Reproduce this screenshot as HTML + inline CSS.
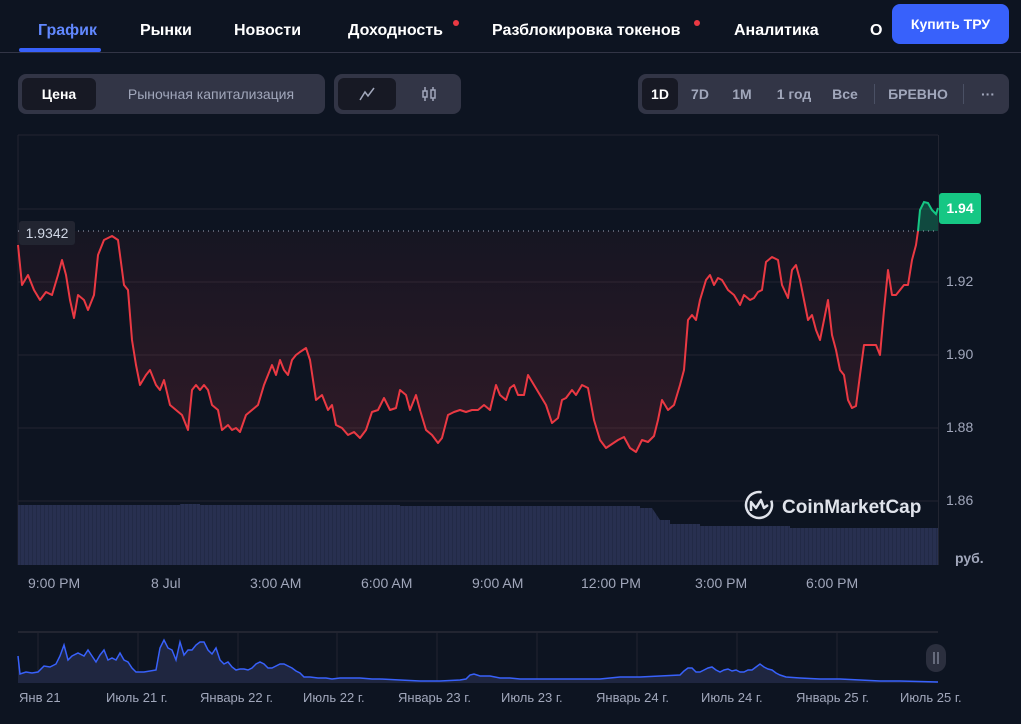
<!DOCTYPE html>
<html><head><meta charset="utf-8"><style>
*{margin:0;padding:0;box-sizing:border-box}
body{width:1021px;height:724px;background:#0d1421;font-family:"Liberation Sans",sans-serif;color:#fff;position:relative;overflow:hidden}
.tab{position:absolute;top:22px;font-size:16px;font-weight:bold;color:#fff}
.dot{position:absolute;width:6px;height:6px;border-radius:3px;background:#ea3943}
.pill{position:absolute;top:74px;height:40px;background:#323546;border-radius:8px}
.seg{position:absolute;top:4px;height:32px;border-radius:6px;font-size:14px;font-weight:bold;line-height:32px;text-align:center;color:#a1a7bb}
.ax{position:absolute;font-size:14px;color:#a1a7bb}
.tl{position:absolute;top:575px;font-size:14px;color:#a1a7bb}
.nl{position:absolute;top:690px;font-size:13px;color:#a1a7bb}
</style></head><body>
<div class="tab" style="left:38px;color:#6188ff">График</div>
<div style="position:absolute;left:19px;top:48px;width:82px;height:4px;background:#3861fb;border-radius:2px"></div>
<div style="position:absolute;left:0;top:52px;width:1021px;height:1px;background:#323546"></div>
<div class="tab" style="left:140px">Рынки</div>
<div class="tab" style="left:234px">Новости</div>
<div class="tab" style="left:348px">Доходность</div><div class="dot" style="left:453px;top:20px"></div>
<div class="tab" style="left:492px">Разблокировка токенов</div><div class="dot" style="left:694px;top:20px"></div>
<div class="tab" style="left:734px">Аналитика</div>
<div class="tab" style="left:870px">О</div>
<div style="position:absolute;left:892px;top:4px;width:117px;height:40px;background:#3861fb;border-radius:8px;font-size:14px;font-weight:bold;line-height:40px;text-align:center">Купить TРУ</div>

<div class="pill" style="left:18px;width:307px">
<div class="seg" style="left:4px;width:74px;background:#171924;color:#fff">Цена</div>
<div class="seg" style="left:86px;width:214px;font-weight:normal">Рыночная капитализация</div></div>
<div class="pill" style="left:334px;width:127px">
<div class="seg" style="left:4px;width:58px;background:#171924"><svg width="18" height="16" viewBox="0 0 18 16" style="margin-top:8px"><path d="M2 14L7 6L10 10L16 2" stroke="#a1a7bb" stroke-width="1.5" fill="none"/></svg></div>
<div class="seg" style="left:66px;width:58px"><svg width="18" height="16" viewBox="0 0 18 16" style="margin-top:8px"><path d="M5 1V15M13 1V15" stroke="#a1a7bb" stroke-width="1.5"/><rect x="3" y="5" width="4" height="6" fill="#323546" stroke="#a1a7bb" stroke-width="1.5"/><rect x="11" y="4" width="4" height="8" fill="#323546" stroke="#a1a7bb" stroke-width="1.5"/></svg></div></div>
<div class="pill" style="left:638px;width:371px">
<div class="seg" style="left:4px;width:36px;background:#171924;color:#fff">1D</div>
<div class="seg" style="left:44px;width:36px">7D</div>
<div class="seg" style="left:86px;width:36px">1M</div>
<div class="seg" style="left:130px;width:52px">1 год</div>
<div class="seg" style="left:188px;width:38px">Все</div>
<div style="position:absolute;left:236px;top:10px;width:1px;height:20px;background:#4a5064"></div>
<div class="seg" style="left:242px;width:76px">БРЕВНО</div>
<div style="position:absolute;left:325px;top:10px;width:1px;height:20px;background:#4a5064"></div>
<div class="seg" style="left:332px;width:36px">···</div></div>

<svg style="position:absolute;left:0;top:0" width="1021" height="724">
<defs>
<linearGradient id="rg2" x1="0" y1="231" x2="0" y2="460" gradientUnits="userSpaceOnUse"><stop offset="0" stop-color="#ea3943" stop-opacity="0.04"/><stop offset="0.8" stop-color="#ea3943" stop-opacity="0.14"/><stop offset="1" stop-color="#ea3943" stop-opacity="0.16"/></linearGradient>
<pattern id="vp" width="4" height="10" patternUnits="userSpaceOnUse"><rect width="4" height="10" fill="#283050"/><rect width="1" height="10" fill="#222a46"/></pattern>
<path id="pl" d="M18,245L22,285L28,275L34,290L40,300L46,292L52,295L58,275L62,260L66,275L70,300L74,318L78,295L84,300L88,310L94,295L98,255L104,240L112,236L118,240L124,285L128,290L132,340L136,365L140,385L146,375L150,370L156,385L160,390L164,380L170,405L176,410L182,415L188,430L192,390L196,385L200,390L204,385L208,390L212,405L218,410L222,430L228,425L232,430L236,428L240,432L246,415L252,410L258,405L264,385L268,375L272,365L276,375L280,360L284,370L288,375L292,360L296,355L300,352L306,348L310,360L316,400L322,395L328,410L332,405L336,425L342,428L348,435L354,432L360,438L366,430L372,412L378,410L384,398L390,410L396,408L400,390L406,395L410,410L416,395L420,410L426,430L432,435L438,443L442,438L448,415L454,412L460,410L466,412L472,410L478,410L484,405L490,410L496,385L500,395L506,400L510,388L514,385L518,395L524,395L528,375L534,385L540,395L546,405L552,423L558,418L562,400L566,398L572,390L576,395L582,385L588,388L594,420L600,440L606,448L612,444L618,440L624,437L630,448L636,452L642,440L648,442L654,436L658,420L662,400L668,410L674,405L680,385L684,370L688,320L692,315L696,320L700,300L706,280L710,275L714,285L718,278L722,280L728,290L734,295L740,305L744,295L750,300L754,298L758,292L762,290L766,262L772,257L778,260L782,285L788,298L792,270L796,265L800,280L804,300L808,320L812,315L816,330L820,340L824,320L828,300L832,335L836,350L840,370L844,375L848,400L852,408L856,406L860,375L864,345L868,345L872,345L876,345L880,355L884,310L888,270L892,295L896,295L900,290L904,285L908,285L912,260L916,245L918,231"/>
<path id="nv" d="M18,656L20,674L26,672L32,673L38,672L44,666L50,667L56,664L60,656L64,645L68,660L72,656L78,653L84,656L88,650L92,656L96,662L100,655L104,650L108,660L112,658L116,660L120,653L124,660L128,662L132,668L136,672L144,672L156,670L160,648L164,640L168,648L172,650L176,660L180,642L184,655L188,650L192,650L196,645L200,642L204,642L208,650L212,654L216,648L220,660L224,664L228,662L232,667L236,670L240,669L244,669L248,670L252,668L256,664L260,662L264,664L268,668L272,668L276,666L280,664L284,664L288,666L292,668L296,671L300,673L304,677L310,677L318,678L326,678L332,679L340,678L350,678L360,678L372,679L380,679L400,680L420,681L440,681L460,680L466,679L470,675L474,674L480,676L490,676L500,678L510,678L520,679L540,679L560,679L600,679L620,677L640,677L680,675L684,671L688,668L692,668L696,672L700,672L704,670L708,668L712,667L716,670L720,672L724,670L728,669L732,671L736,670L740,672L744,672L748,670L752,670L756,667L760,664L764,667L768,669L772,670L776,673L780,675L786,677L800,678L820,679L840,679L860,680L880,681L900,681L938,682"/>
</defs>
<g stroke="#222531" stroke-width="1">
<line x1="18" y1="135" x2="938" y2="135"/><line x1="18" y1="209" x2="938" y2="209"/><line x1="18" y1="282" x2="938" y2="282"/><line x1="18" y1="355" x2="938" y2="355"/><line x1="18" y1="428" x2="938" y2="428"/><line x1="18" y1="501" x2="938" y2="501"/>
<line x1="18" y1="135" x2="18" y2="565"/><line x1="938.5" y1="135" x2="938.5" y2="565"/></g>
<path d="M18 505H180V504H200V505H400V506H640V508H652L660 520H670V524H700V526H790V528H938V565H18Z" fill="url(#vp)"/>
<path d="M18,231L18,245L22,285L28,275L34,290L40,300L46,292L52,295L58,275L62,260L66,275L70,300L74,318L78,295L84,300L88,310L94,295L98,255L104,240L112,236L118,240L124,285L128,290L132,340L136,365L140,385L146,375L150,370L156,385L160,390L164,380L170,405L176,410L182,415L188,430L192,390L196,385L200,390L204,385L208,390L212,405L218,410L222,430L228,425L232,430L236,428L240,432L246,415L252,410L258,405L264,385L268,375L272,365L276,375L280,360L284,370L288,375L292,360L296,355L300,352L306,348L310,360L316,400L322,395L328,410L332,405L336,425L342,428L348,435L354,432L360,438L366,430L372,412L378,410L384,398L390,410L396,408L400,390L406,395L410,410L416,395L420,410L426,430L432,435L438,443L442,438L448,415L454,412L460,410L466,412L472,410L478,410L484,405L490,410L496,385L500,395L506,400L510,388L514,385L518,395L524,395L528,375L534,385L540,395L546,405L552,423L558,418L562,400L566,398L572,390L576,395L582,385L588,388L594,420L600,440L606,448L612,444L618,440L624,437L630,448L636,452L642,440L648,442L654,436L658,420L662,400L668,410L674,405L680,385L684,370L688,320L692,315L696,320L700,300L706,280L710,275L714,285L718,278L722,280L728,290L734,295L740,305L744,295L750,300L754,298L758,292L762,290L766,262L772,257L778,260L782,285L788,298L792,270L796,265L800,280L804,300L808,320L812,315L816,330L820,340L824,320L828,300L832,335L836,350L840,370L844,375L848,400L852,408L856,406L860,375L864,345L868,345L872,345L876,345L880,355L884,310L888,270L892,295L896,295L900,290L904,285L908,285L912,260L916,245L918,231Z" fill="url(#rg2)"/>
<use href="#pl" fill="none" stroke="#ea3943" stroke-width="2" stroke-linejoin="round"/>
<path d="M918,231L920,210L924,202L928,203L932,210L936,214L938,208L938,231Z" fill="#16c784" fill-opacity="0.3"/>
<path d="M918,231L920,210L924,202L928,203L932,210L936,214L938,208" fill="none" stroke="#16c784" stroke-width="2"/>
<line x1="18" y1="231" x2="938" y2="231" stroke="#a1a7bb" stroke-width="1" stroke-dasharray="1,4"/>
<circle cx="759" cy="505" r="13" fill="none" stroke="#e0e3eb" stroke-width="2.5" stroke-dasharray="68 14" transform="rotate(-20 759 505)"/>
<path d="M751 511V502L756 508L761 500L764 508L768 505" fill="none" stroke="#e0e3eb" stroke-width="2.5" stroke-linejoin="round"/>
<text x="782" y="513" font-family="Liberation Sans" font-size="19" fill="#e0e3eb" font-weight="bold">CoinMarketCap</text>
<line x1="18" y1="632" x2="938" y2="632" stroke="#222531" stroke-width="2"/>
<g stroke="#222531"><line x1="38" y1="632" x2="38" y2="682"/><line x1="138" y1="632" x2="138" y2="682"/><line x1="238" y1="632" x2="238" y2="682"/><line x1="337" y1="632" x2="337" y2="682"/><line x1="437" y1="632" x2="437" y2="682"/><line x1="537" y1="632" x2="537" y2="682"/><line x1="637" y1="632" x2="637" y2="682"/><line x1="737" y1="632" x2="737" y2="682"/><line x1="837" y1="632" x2="837" y2="682"/></g>
<path d="M18,656L20,674L26,672L32,673L38,672L44,666L50,667L56,664L60,656L64,645L68,660L72,656L78,653L84,656L88,650L92,656L96,662L100,655L104,650L108,660L112,658L116,660L120,653L124,660L128,662L132,668L136,672L144,672L156,670L160,648L164,640L168,648L172,650L176,660L180,642L184,655L188,650L192,650L196,645L200,642L204,642L208,650L212,654L216,648L220,660L224,664L228,662L232,667L236,670L240,669L244,669L248,670L252,668L256,664L260,662L264,664L268,668L272,668L276,666L280,664L284,664L288,666L292,668L296,671L300,673L304,677L310,677L318,678L326,678L332,679L340,678L350,678L360,678L372,679L380,679L400,680L420,681L440,681L460,680L466,679L470,675L474,674L480,676L490,676L500,678L510,678L520,679L540,679L560,679L600,679L620,677L640,677L680,675L684,671L688,668L692,668L696,672L700,672L704,670L708,668L712,667L716,670L720,672L724,670L728,669L732,671L736,670L740,672L744,672L748,670L752,670L756,667L760,664L764,667L768,669L772,670L776,673L780,675L786,677L800,678L820,679L840,679L860,680L880,681L900,681L938,682L938,683L18,683Z" fill="#1f2640"/>
<use href="#nv" fill="none" stroke="#3861fb" stroke-width="1.5"/>
<rect x="926" y="644" width="20" height="28" rx="10" fill="#2b2f3e"/>
<line x1="934" y1="652" x2="934" y2="664" stroke="#a1a7bb"/><line x1="938" y1="652" x2="938" y2="664" stroke="#a1a7bb"/>
</svg>

<div class="ax" style="left:946px;top:273px">1.92</div>
<div class="ax" style="left:946px;top:346px">1.90</div>
<div class="ax" style="left:946px;top:419px">1.88</div>
<div class="ax" style="left:946px;top:492px">1.86</div>
<div class="ax" style="left:955px;top:550px;font-weight:bold">руб.</div>
<div style="position:absolute;left:939px;top:193px;width:42px;height:31px;background:#16c784;border-radius:3px;font-size:14px;font-weight:bold;line-height:31px;text-align:center">1.94</div>
<div style="position:absolute;left:19px;top:221px;width:56px;height:24px;background:#222531;border-radius:3px;font-size:14px;color:#cfd6e4;line-height:24px;text-align:center">1.9342</div>

<div class="tl" style="left:28px">9:00 PM</div>
<div class="tl" style="left:151px">8 Jul</div>
<div class="tl" style="left:250px">3:00 AM</div>
<div class="tl" style="left:361px">6:00 AM</div>
<div class="tl" style="left:472px">9:00 AM</div>
<div class="tl" style="left:581px">12:00 PM</div>
<div class="tl" style="left:695px">3:00 PM</div>
<div class="tl" style="left:806px">6:00 PM</div>

<div class="nl" style="left:19px">Янв 21</div>
<div class="nl" style="left:106px">Июль 21 г.</div>
<div class="nl" style="left:200px">Январь 22 г.</div>
<div class="nl" style="left:303px">Июль 22 г.</div>
<div class="nl" style="left:398px">Январь 23 г.</div>
<div class="nl" style="left:501px">Июль 23 г.</div>
<div class="nl" style="left:596px">Январь 24 г.</div>
<div class="nl" style="left:701px">Июль 24 г.</div>
<div class="nl" style="left:796px">Январь 25 г.</div>
<div class="nl" style="left:900px">Июль 25 г.</div>
</body></html>
